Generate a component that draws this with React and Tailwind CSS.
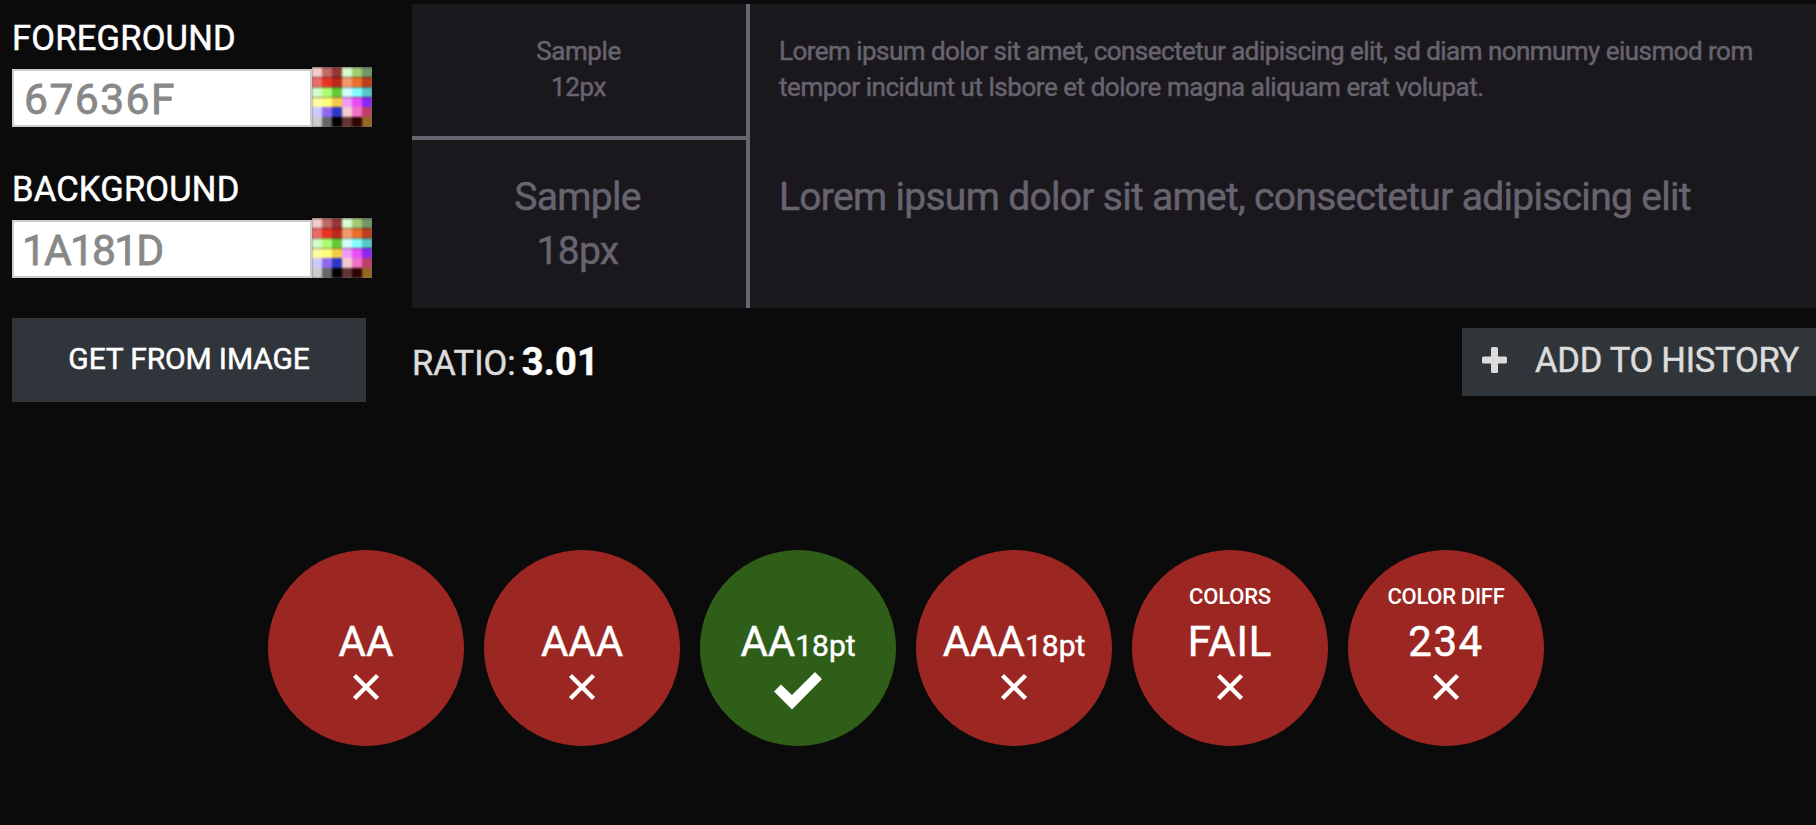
const swatches = [
  ['bg-[#f4cccb]', 'bg-[#c06a66]', 'bg-[#943835]', 'bg-[#d5fdd0]', 'bg-[#a6ca72]', 'bg-[#709869]'],
  ['bg-[#ec6b64]', 'bg-[#ea3323]', 'bg-[#bd261a]', 'bg-[#f29b6f]', 'bg-[#ee6d2d]', 'bg-[#be3d1b]'],
  ['bg-[#d3fccb]', 'bg-[#affc72]', 'bg-[#65c837]', 'bg-[#d4fefe]', 'bg-[#84fbfd]', 'bg-[#57c8c7]'],
  ['bg-[#fefda3]', 'bg-[#fffd78]', 'bg-[#f6ca45]', 'bg-[#ef9bf6]', 'bg-[#ea4df4]', 'bg-[#8a29f5]'],
  ['bg-[#cbcbfb]', 'bg-[#8f68f0]', 'bg-[#2c37c4]', 'bg-[#f5cbcd]', 'bg-[#ee70c8]', 'bg-[#bd3f66]'],
  ['bg-[#cbcbcb]', 'bg-[#666666]', 'bg-[#000000]', 'bg-[#623534]', 'bg-[#2e0402]', 'bg-[#936822]'],
];

function Palette() {
  return (
    <div className="h-[60px] w-[60px] shrink-0 overflow-hidden bg-[#77716c]">
      <div className="grid grid-cols-6 blur-[0.8px]">
        {swatches.map((row, r) =>
          row.map((c, i) => (
            <div key={r + '-' + i} className={'h-[10px] ' + c + (r < 4 ? ' border-t border-black/45' : '')} />
          ))
        )}
      </div>
    </div>
  );
}

function ColorField({ label, value, valueClass }) {
  return (
    <div>
      <div className="h-[39px] text-[34.5px] leading-[38px] tracking-[0.2px] text-white whitespace-nowrap">{label}</div>
      <div className="mt-[9px] flex items-end">
        <div className={'h-[58px] w-[300px] border-2 border-[#cccccc] bg-white text-[42.5px] leading-[58px] text-[#888888] [-webkit-text-stroke:0.8px] ' + valueClass}>{value}</div>
        <Palette />
      </div>
    </div>
  );
}

function Cross() {
  return (
    <svg className="h-[30px] w-[30px] blur-[0.5px]" viewBox="0 0 30 30" fill="none" stroke="white" strokeWidth="4.4">
      <path d="M3.5 3.5 26.5 26.5M26.5 3.5 3.5 26.5" />
    </svg>
  );
}

function Check() {
  return (
    <svg className="h-[38px] w-[48px] blur-[0.5px]" viewBox="0 0 48 38" fill="white">
      <path d="M0 19.5 7 12.5 18 23 41 0 48 7 18 37.5Z" />
    </svg>
  );
}

function Badge({ caption, captionClass = '', text, textClass = '', small, pass }) {
  return (
    <div className={'flex h-[196px] w-[196px] flex-col items-center rounded-full text-white ' + (pass ? 'bg-[#2f5e18]' : 'bg-[#9c2722]')}>
      <div className={'mt-[34px] h-[28px] text-[22px] font-medium leading-[26px] whitespace-nowrap [-webkit-text-stroke:0px] ' + captionClass}>{caption}</div>
      <div className="mt-[5px] h-[50px] whitespace-nowrap leading-[50px]">
        <span className={'text-[42px] ' + textClass}>{text}</span>
        {small && <span className="text-[30px]">{small}</span>}
      </div>
      <div className="mt-[5px]">{pass ? <Check /> : <Cross />}</div>
    </div>
  );
}

export default function App() {
  return (
    <div className="h-[825px] w-[1816px] overflow-hidden bg-[#0b0b0b] font-['Roboto','Liberation_Sans',sans-serif] [-webkit-text-stroke:0.5px]">
      <div className="flex h-[402px]">
        <div className="w-[412px] shrink-0 pl-[12px] pt-[19px]">
          <ColorField label="FOREGROUND" value="67636F" valueClass="pl-[10px] tracking-[1.5px]" />
          <div className="h-[43px]" />
          <ColorField label="BACKGROUND" value="1A181D" valueClass="pl-[8px] tracking-[-1.8px]" />
          <button className="mt-[40px] block h-[84px] w-[354px] bg-[#30343b] pb-[2px] text-[30px] leading-[82px] tracking-[-0.15px] text-white">GET FROM IMAGE</button>
        </div>
        <div className="w-[1404px] pt-[4px]">
          <div className="flex h-[304px] bg-[#1a181d] text-[#67636f]">
            <div className="w-[338px] border-r-4 border-[#67636f] text-center">
              <div className="h-[136px] border-b-4 border-[#67636f] pr-px pt-[29px] text-[26px] leading-[36px] tracking-[-0.4px]">
                <div>Sample</div>
                <div>12px</div>
              </div>
              <div className="pr-[3px] pt-[30px] text-[39px] leading-[54px] tracking-[-0.7px]">
                <div>Sample</div>
                <div>18px</div>
              </div>
            </div>
            <div className="pl-[29px] whitespace-nowrap">
              <div className="h-[136px] pt-[29px] text-[26px] leading-[36px]">
                <div className="tracking-[-0.54px]">Lorem ipsum dolor sit amet, consectetur adipiscing elit, sd diam nonmumy eiusmod rom</div>
                <div className="tracking-[-0.45px]">tempor incidunt ut lsbore et dolore magna aliquam erat volupat.</div>
              </div>
              <div className="pt-[30px] text-[39px] leading-[54px] tracking-[-0.7px]">Lorem ipsum dolor sit amet, consectetur adipiscing elit</div>
            </div>
          </div>
          <div className="flex justify-between pt-[20px]">
            <div className="flex h-[68px] items-baseline leading-[68px] text-[#dcdcdc]">
              <span className="text-[34.5px]">RATIO:</span>
              <span className="ml-[6px] text-[38px] font-bold tracking-[0.2px] text-white">3.01</span>
            </div>
            <button className="flex h-[68px] w-[354px] items-center bg-[#303539] pb-[2px] pl-[20px] text-[34.5px] tracking-[-0.25px] whitespace-nowrap text-[#dcdcdc]">
              <svg className="mt-[-2px] mr-[28px] h-[26px] w-[25px] shrink-0" viewBox="0 0 25 26" fill="currentColor">
                <rect x="9" width="7" height="26" rx="1.5" />
                <rect y="9.5" width="25" height="7" rx="1.5" />
              </svg>
              ADD TO HISTORY
            </button>
          </div>
        </div>
      </div>
      <div className="flex gap-[20px] pl-[268px] pt-[148px]">
        <Badge text="AA" />
        <Badge text="AAA" />
        <Badge text="AA" small="18pt" pass />
        <Badge text="AAA" small="18pt" />
        <Badge caption="COLORS" captionClass="tracking-[-0.2px]" text="FAIL" textClass="tracking-[0.8px]" />
        <Badge caption="COLOR DIFF" captionClass="tracking-[-0.3px]" text="234" textClass="tracking-[1.6px]" />
      </div>
    </div>
  );
}
